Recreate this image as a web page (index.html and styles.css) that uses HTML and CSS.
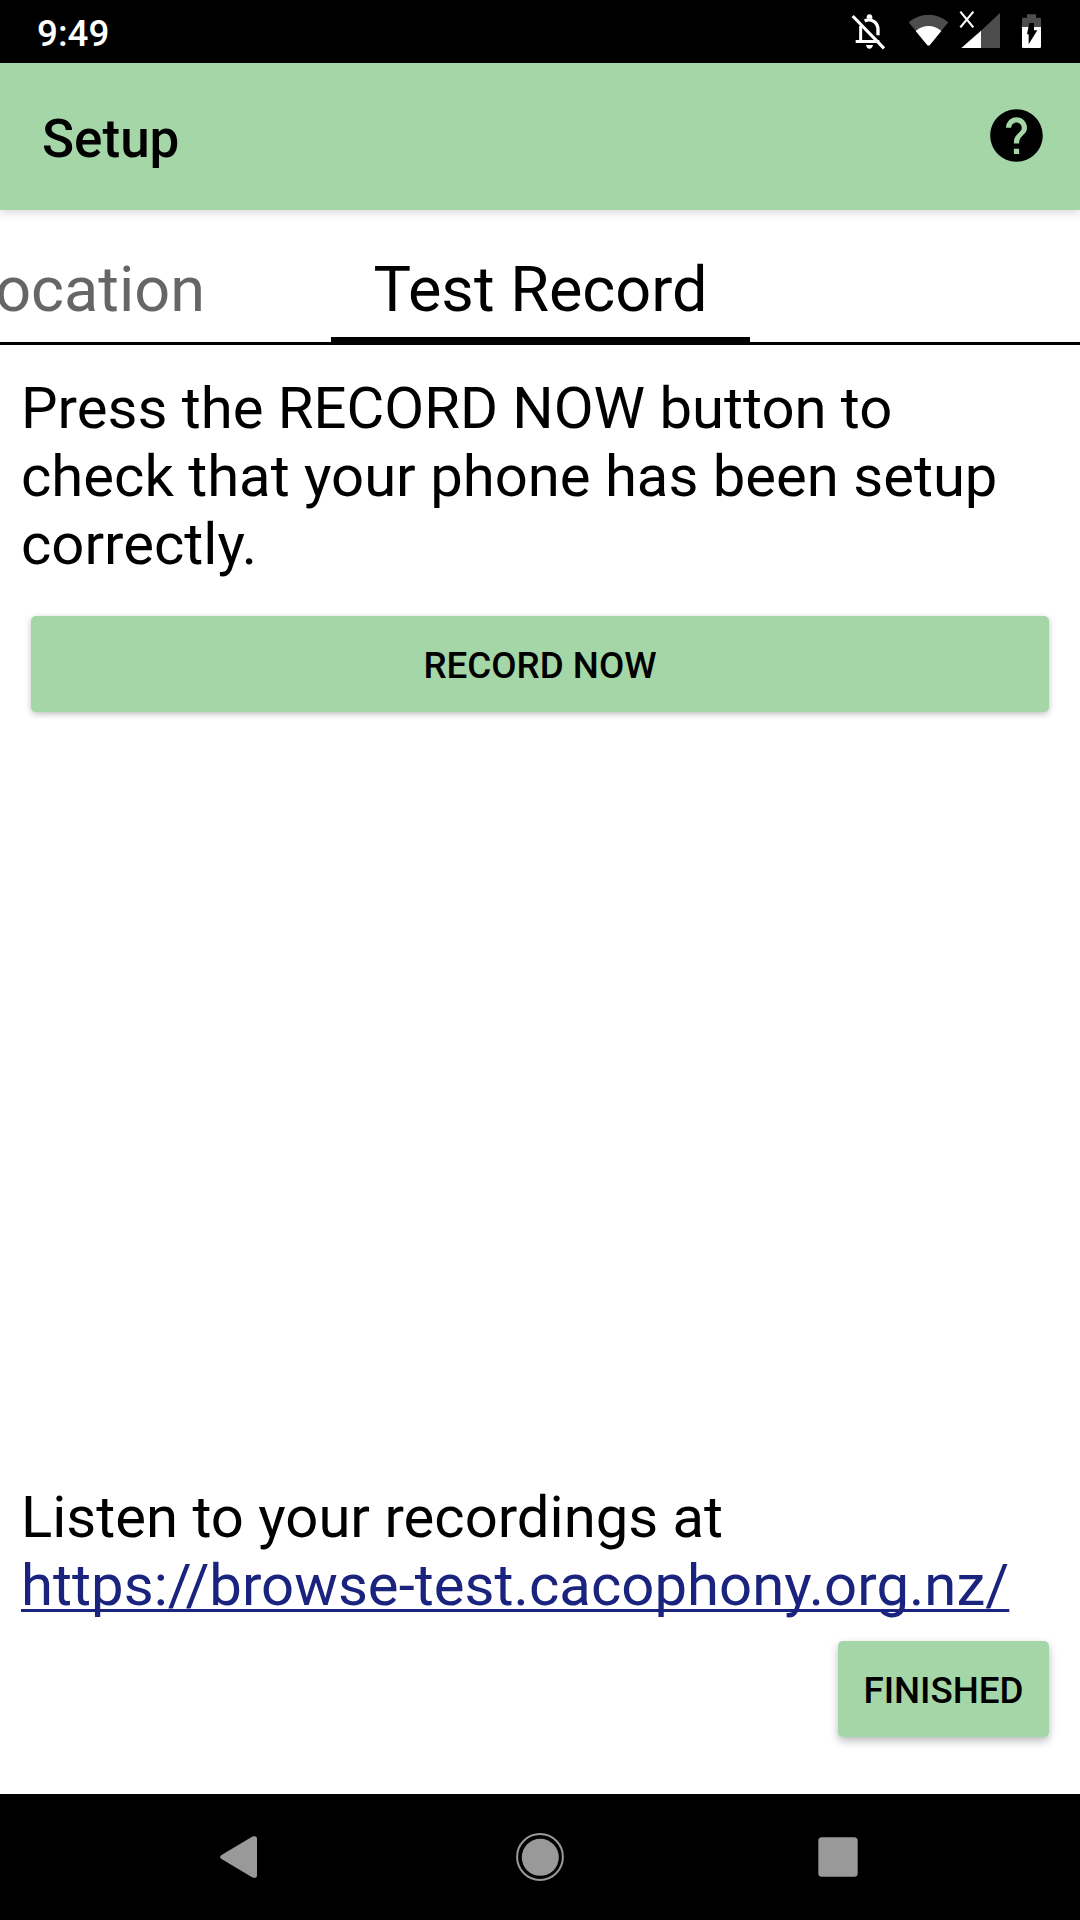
FILE: index.html
```html
<!DOCTYPE html>
<html lang="en">
<head>
<meta charset="utf-8">
<title>Setup</title>
<link rel="stylesheet" href="styles.css">
</head>
<body>
<div class="screen">
  <div class="status-bar">
    <span class="clock">9:49</span>
    <div class="status-icons">
      <svg class="icon-bell" viewBox="90 30 108 120" width="36" height="40">
        <g fill="none" stroke="#fff">
          <path d="M122 78V124M107 124.500H178" stroke-width="9"/>
          <path d="M134 63C150 54 174 64 174 90V106" stroke-width="10"/>
          <path d="M98 48L192 145" stroke-width="9.500"/>
        </g>
        <path d="M140 55V50Q141 43 148 43Q156 43 157 50V57ZM138 135H159Q157 146 148 146Q140 146 138 135Z" fill="#fff"/>
      </svg>
      <svg class="icon-wifi" viewBox="264 30 123 120" width="41" height="40">
        <path d="M266 67Q292 44 325.500 44Q359 44 385 67L330 134Q325.500 139 321 134Z" fill="#4d4d4d"/>
        <path d="M287 93Q305 78 325.500 78Q346 78 364 93L330 134Q325.500 139 321 134Z" fill="#fff"/>
      </svg>
      <svg class="icon-signal" viewBox="414 30 129 120" width="43" height="40">
        <path d="M540 39V144H483V92Z" fill="#4d4d4d"/>
        <path d="M483 92V144H424Z" fill="#fff"/>
        <path d="M421 35L460 82M460 35L421 82" stroke="#fff" stroke-width="6.500"/>
      </svg>
      <svg class="icon-battery" viewBox="603 30 63 120" width="21" height="40">
        <path d="M606 81V57Q606 53 610 53H621V43H648V53H659Q663 53 663 57V81Z" fill="#4d4d4d"/>
        <path d="M606 81H663V140Q663 144 659 144H610Q606 144 606 140Z" fill="#fff"/>
        <path d="M628 69H642V91H652L626 133V103H621Z" fill="#000"/>
      </svg>
    </div>
  </div>

  <header class="app-bar">
    <h1 class="title">Setup</h1>
    <svg class="help" viewBox="0 0 24 24" width="63" height="63">
      <path d="M12 2C6.480 2 2 6.480 2 12s4.480 10 10 10 10-4.480 10-10S17.520 2 12 2zm1 17h-2v-2h2v2zm2.070-7.750l-.9.920C13.450 12.900 13 13.500 13 15h-2v-.5c0-1.100.45-2.100 1.170-2.830l1.240-1.260c.37-.36.59-.86.59-1.410 0-1.100-.9-2-2-2s-2 .9-2 2H8c0-2.210 1.790-4 4-4s4 1.790 4 4c0 .88-.36 1.680-.93 2.250z"/>
    </svg>
  </header>

  <nav class="tabs">
    <span class="tab tab-previous">Location</span>
    <span class="tab tab-active">Test Record</span>
  </nav>

  <main class="content">
    <p class="text">Press the RECORD NOW button to check that your phone has been setup correctly.</p>
    <button class="button record">RECORD NOW</button>
    <p class="text listen">Listen to your recordings at<br><a class="link" href="#">https://browse-test.cacophony.org.nz/</a></p>
    <button class="button finished">FINISHED</button>
  </main>

  <div class="nav-bar">
    <svg class="back" viewBox="0 0 37 42" width="37" height="42">
      <path d="M1.500 19L32.500 .6Q37 -1 37 3V39Q37 43 32.500 41.400L1.500 23Q-1.300 21 1.500 19Z" fill="#999"/>
    </svg>
    <svg class="home" viewBox="0 0 48 48" width="48" height="48">
      <circle cx="24" cy="24" r="22.900" fill="none" stroke="#999" stroke-width="2"/>
      <circle cx="24.300" cy="24.300" r="18.500" fill="#999"/>
    </svg>
    <svg class="recents" viewBox="0 0 40 40" width="40" height="40">
      <rect x=".3" y=".3" width="39.400" height="39.400" rx="3.500" fill="#999"/>
    </svg>
  </div>
</div>
</body>
</html>
```

FILE: styles.css
```css
* {
  box-sizing: border-box;
}

body {
  margin: 0;
  font-family: Roboto, "Liberation Sans", sans-serif;
  color: #000;
  background: #fff;
}

.screen {
  display: flex;
  flex-direction: column;
  width: 1080px;
  height: 1920px;
  overflow: hidden;
}

.status-bar {
  display: flex;
  justify-content: space-between;
  flex: none;
  height: 63px;
  padding: 10px 38px 0 37px;
  background: #000;
}

.clock {
  padding-top: 1px;
  color: #fff;
  font-size: 36.75px;
  font-weight: 500;
  line-height: 46px;
}

.status-icons {
  display: flex;
}

.icon-wifi {
  margin-left: 22px;
}

.icon-signal {
  margin-left: 9px;
}

.icon-battery {
  margin-left: 20px;
}

.app-bar {
  display: flex;
  align-items: center;
  justify-content: space-between;
  flex: none;
  height: 147px;
  padding: 0 32px 0 42px;
  background: #a5d6a7;
  box-shadow: 0 3px 9px rgba(0, 0, 0, 0.15);
}

.title {
  margin: 5px 0 0;
  font-size: 53px;
  font-weight: 500;
  line-height: 62px;
}

.help {
  margin-bottom: 2px;
}

.tabs {
  display: flex;
  justify-content: flex-end;
  flex: none;
  height: 135px;
  padding-right: 330px;
  border-bottom: 3px solid #000;
}

.tab {
  flex: none;
  height: 135px;
  padding-top: 43px;
  font-size: 63px;
  line-height: 74px;
  white-space: nowrap;
}

.tab-previous {
  margin-right: 126px;
  color: #666;
}

.tab-active {
  width: 419px;
  border-bottom: 8px solid #000;
  text-align: center;
}

.content {
  display: flex;
  flex-direction: column;
  flex: 1;
  padding: 29px 31px 57px 21px;
}

.text {
  margin: 0;
  font-size: 58px;
  line-height: 68px;
}

.button {
  flex: none;
  height: 96px;
  padding: 3px 0 0;
  border: 0;
  border-radius: 5px;
  background: #a5d6a7;
  color: #000;
  font-family: inherit;
  font-size: 36.75px;
  font-weight: 500;
  line-height: 44px;
}

.record {
  margin: 38px 0 0 10px;
  box-shadow: 0 2px 6px rgba(0, 0, 0, 0.26);
}

.listen {
  margin-top: auto;
}

.link {
  color: #1a237e;
  letter-spacing: 0.05px;
  text-decoration-line: underline;
  text-decoration-thickness: 3px;
  text-decoration-skip-ink: none;
  text-underline-offset: 4px;
}

.finished {
  align-self: flex-end;
  width: 211px;
  margin-top: 22px;
  box-shadow: 0 4px 8px rgba(0, 0, 0, 0.27);
}

.nav-bar {
  display: flex;
  align-items: center;
  flex: none;
  height: 126px;
  padding-left: 220px;
  background: #000;
}

.home {
  margin-left: 259px;
}

.recents {
  margin-left: 254px;
}
```
